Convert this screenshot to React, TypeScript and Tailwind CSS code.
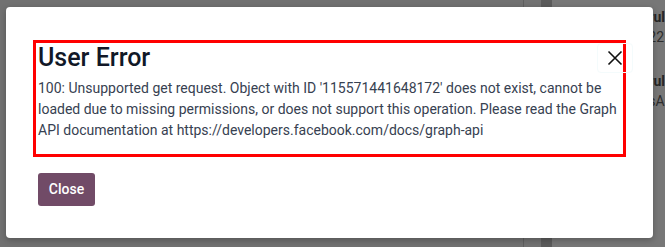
import React from "react";

const App = () => {
  return (
    <div
      className="relative flex h-[247px] w-[665px] overflow-hidden bg-[#717171]"
      style={{ fontFamily: "Roboto, 'Noto Sans', sans-serif" }}
    >
      {/* page behind the backdrop */}
      <div className="w-[528px] bg-[#717171]"></div>
      <div className="w-[19px] border-l border-[#5f5f5f] bg-[#727272]"></div>
      <div className="w-[11px] bg-[#5b5b5b]"></div>
      <div className="flex-1 bg-[#777777] pl-[96px] pt-[7px] text-[14px] leading-[20px] text-[#262626] whitespace-nowrap">
        <div className="font-bold">rul</div>
        <div className="text-[#2e2e2e]">22</div>
        <div className="mt-[24px] font-bold">rul</div>
        <div className="text-[#2e2e2e]">sA</div>
      </div>

      {/* dialog */}
      <div className="absolute left-[6px] top-[7px] flex w-[647px] flex-col rounded-[4px] bg-white px-[27px] pt-[33px] pb-[32px] shadow-[0_2px_6px_rgba(0,0,0,0.25)]">
        <div className="h-[117px] border-[3px] border-[#ff0000] pl-[2px] pr-[4px]">
          <h4 className="text-[25px] leading-[30px] font-medium text-[#111827]">User Error</h4>
          <p className="mt-[5px] text-[14px] leading-[21px] text-[#374151]">
            100: Unsupported get request. Object with ID '115571441648172' does not exist, cannot be loaded due to
            missing permissions, or does not support this operation. Please read the Graph API documentation at
            https://developers.facebook.com/docs/graph-api
          </p>
        </div>
        <div className="ml-[5px] mt-[16px]">
          <button className="h-[33px] w-[57px] rounded-[3px] bg-[#714b67] text-[14px] font-medium text-white">
            Close
          </button>
        </div>

        <button className="absolute left-[591px] top-[36px] flex h-[30px] w-[36px] items-center justify-center rounded-[4px] border border-[#f4fbfc]">
          <svg width="16" height="16" viewBox="0 0 16 16" fill="none" stroke="#111" strokeWidth="1.6">
            <path d="M1.5 1.5 L14.5 14.5 M14.5 1.5 L1.5 14.5" />
          </svg>
        </button>
      </div>
    </div>
  );
};

export default App;
